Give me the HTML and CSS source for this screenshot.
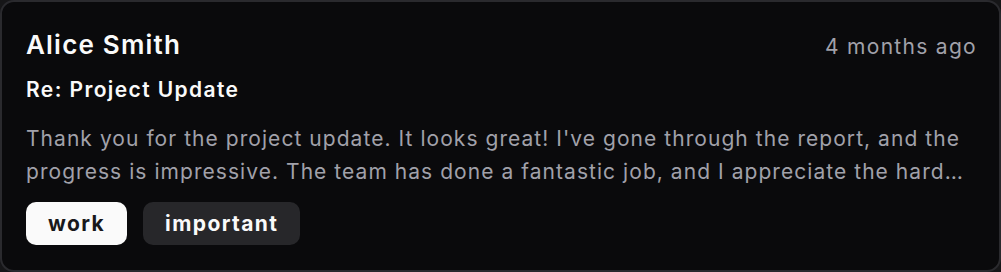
FILE: index.html
```html
<!DOCTYPE html>
<html lang="en">
<head>
<meta charset="utf-8">
<title>Mail item</title>
<link rel="stylesheet" href="styles.css">
</head>
<body>
<article class="card">
  <header class="card-head">
    <h2 class="name">Alice Smith</h2>
    <span class="time">4 months ago</span>
  </header>
  <h3 class="subject">Re: Project Update</h3>
  <p class="preview">Thank you for the project update. It looks great! I've gone through the report, and the progress is impressive. The team has done a fantastic job, and I appreciate the hard work everyone has put in. I have a few minor suggestions that I'll include in the attached document.</p>
  <div class="tags">
    <span class="tag tag-light">work</span>
    <span class="tag tag-dark">important</span>
  </div>
</article>
</body>
</html>
```
FILE: styles.css
```css
* { box-sizing: border-box; }
html, body { margin: 0; padding: 0; }
body {
  background: #161618;
  font-family: Inter, "Noto Sans", sans-serif;
  width: 1001px;
  height: 272px;
}
.card {
  width: 1001px;
  height: 272px;
  background: #0a0a0c;
  border: 2px solid #2a2a2e;
  border-radius: 14px;
  padding: 26px 22px 0 24px;
  display: flex;
  flex-direction: column;
}
.card-head {
  display: flex;
  justify-content: space-between;
  align-items: baseline;
}
.name {
  margin: 0;
  font-size: 26px;
  font-weight: 600;
  letter-spacing: 1.2px;
  color: #fafafa;
  line-height: 34px;
}
.time {
  font-size: 21px;
  letter-spacing: 1.3px;
  color: #a1a1aa;
}
.subject {
  margin: 14px 0 0 0;
  font-size: 21px;
  font-weight: 600;
  letter-spacing: 1.4px;
  color: #fafafa;
  line-height: 28px;
}
.preview {
  margin: 18px 0 0 0;
  padding-right: 6px;
  font-size: 21px;
  line-height: 33px;
  letter-spacing: 1.05px;
  color: #a1a1aa;
  display: -webkit-box;
  -webkit-line-clamp: 2;
  -webkit-box-orient: vertical;
  overflow: hidden;
}
.tags {
  display: flex;
  gap: 16px;
  margin-top: 14px;
}
.tag {
  height: 43px;
  padding: 0 22px;
  border-radius: 10px;
  font-size: 21px;
  font-weight: 700;
  letter-spacing: 1.4px;
  display: flex;
  align-items: center;
}
.tag-light { background: #fafafa; color: #18181b; }
.tag-dark { background: #27272a; color: #fafafa; }
```
